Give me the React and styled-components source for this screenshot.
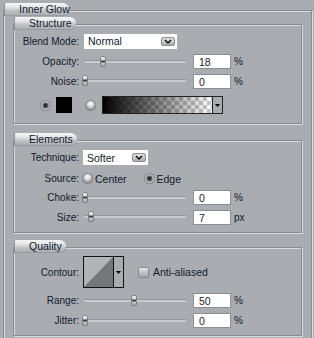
import React from 'react';
import styled, { createGlobalStyle } from 'styled-components';

const Global = createGlobalStyle`
  body {
    margin: 0;
    background: #a9acb0;
    font-family: "Liberation Sans", Arial, sans-serif;
    font-size: 10px;
    color: #111b2e;
    overflow: hidden;
  }
`;

const Panel = styled.div`
  padding: 10px 0 0 3px;
  width: 309px;
`;

// etched group box, like a classic fieldset
const Group = styled.section`
  display: flex;
  flex-direction: column;
  border: 1px solid #888b8f;
  box-shadow: inset 1px 1px 0 #d8dadc, 1px 1px 0 #d8dadc;
  margin: ${({ $mt }) => $mt || 0}px ${({ $mx }) => $mx || 0}px 0 ${({ $ml }) => $ml || 0}px;
  padding-bottom: ${({ $pb }) => $pb || 0}px;
`;

const Tab = styled.div`
  align-self: flex-start;
  height: 13px;
  line-height: 13px;
  margin-top: -8px;
  padding: 0 4px 0 15px;
  ${({ $w }) => $w && `width: ${$w}px; box-sizing: border-box;`}
  border-radius: 1px 6px 6px 1px;
  background: linear-gradient(to bottom, #f6f7f8 0%, #e4e6e8 30%, #bfc2c5 60%, #a6a9ac 100%);
  box-shadow: inset 1px 0 0 #8e9195, inset 0 -1px 0 #989b9f;
  font-size: 10.5px;
  white-space: nowrap;
`;

const Row = styled.div`
  display: flex;
  align-items: center;
  height: ${({ $h }) => $h}px;
`;

const Label = styled.span`
  width: 65px;
  flex-shrink: 0;
  text-align: right;
  white-space: nowrap;
`;

const Select = styled.div`
  display: flex;
  align-items: center;
  justify-content: space-between;
  box-sizing: border-box;
  width: ${({ $w }) => $w}px;
  height: 15px;
  margin-left: ${({ $ml }) => $ml}px;
  padding: 0 2px 0 4px;
  background: #fff;
  font-size: 10.5px;
`;

const DropButton = styled.span`
  display: flex;
  align-items: center;
  justify-content: center;
  width: 14px;
  height: 9px;
  border-radius: 3px;
  background: linear-gradient(to bottom, #eceef0, #a3a6aa);
  box-shadow: inset 0 0 0 1px #8a8d91;
`;

const Slider = styled.div`
  position: relative;
  width: 104px;
  height: 12px;
  margin-left: 3px;
  flex-shrink: 0;
  &::before {
    content: '';
    position: absolute;
    left: 2px;
    right: 0;
    top: 5px;
    height: 2px;
    border-radius: 1px;
    background: #c9cbce;
    box-shadow: 0 -1px 0 #929599;
  }
`;

const Thumb = styled.span`
  position: absolute;
  top: 0;
  width: 6px;
  height: 11px;
  border-radius: 2px;
  background: linear-gradient(to bottom, #f2f3f4 0%, #d2d4d6 40%, #3a3c40 42%, #3a3c40 58%, #c5c7ca 60%, #9fa2a5 100%);
  box-shadow: inset 0 0 0 1px #7d8084;
`;

const Field = styled.div`
  box-sizing: border-box;
  width: 38px;
  height: 15px;
  margin-left: 7px;
  padding-left: 5px;
  line-height: 14px;
  background: #fff;
  border: 1px solid #8c8f93;
  color: #1c2233;
  font-size: 10.5px;
`;

const Unit = styled.span`
  margin-left: 3px;
`;

const Radio = styled.span`
  flex-shrink: 0;
  width: 11px;
  height: 11px;
  border-radius: 50%;
  margin-left: ${({ $ml }) => $ml}px;
  background: ${({ $on }) => $on
    ? 'radial-gradient(circle at 50% 50%, #2e3034 0 1.5px, #6d7074 2.5px, #c9cbce 4px, #9a9da1 5.5px)'
    : 'radial-gradient(circle at 50% 35%, #ffffff 0, #e2e4e6 2px, #bbbec1 4px, #8f9296 5.5px)'};
  box-shadow: inset 0 0 0 1px #85888c;
`;

const RadioText = styled.span`
  margin-left: 2px;
  font-size: 10.5px;
`;

const Swatch = styled.span`
  width: 16px;
  height: 16px;
  margin-left: 5px;
  background: #000;
`;

const GradientPick = styled.div`
  display: flex;
  height: 16px;
  margin-left: 6px;
  border: 1px solid #222;
`;

const GradientBar = styled.span`
  width: 109px;
  background:
    linear-gradient(to right, #000 0%, rgba(0, 0, 0, 0) 100%),
    conic-gradient(#c8c8c8 25%, #ffffff 0 50%, #c8c8c8 0 75%, #ffffff 0) 0 0 / 8px 8px;
`;

const ArrowCell = styled.span`
  display: flex;
  align-items: center;
  justify-content: center;
  width: 9px;
  border-left: 1px solid #222;
  background: #a9acb0;
`;

const ContourPick = styled.div`
  display: flex;
  width: 41px;
  height: 32px;
  margin-left: 4px;
  box-sizing: border-box;
  border: 1px solid #111;
`;

const ContourPreview = styled.svg`
  display: block;
  width: 29px;
  height: 30px;
  border-right: 1px solid #111;
`;

const ContourArrow = styled.span`
  display: flex;
  align-items: center;
  justify-content: center;
  flex: 1;
`;

const Check = styled.span`
  width: 11px;
  height: 11px;
  margin-left: 14px;
  border-radius: 2px;
  background: linear-gradient(to bottom, #eeeff0, #c2c4c7 50%, #9a9da1);
  box-shadow: inset 0 0 0 1px #85888c;
`;

const CheckText = styled.span`
  margin-left: 4px;
  font-size: 10.5px;
`;

const Chevron = () => (
  <svg width="8" height="5" viewBox="0 0 8 5">
    <path d="M1 1 L4 4 L7 1" fill="none" stroke="#111" strokeWidth="1.5" />
  </svg>
);

const Tri = () => (
  <svg width="5" height="3" viewBox="0 0 5 3">
    <path d="M0 0 H5 L2.5 3 Z" fill="#000" />
  </svg>
);

const SliderRow = ({ h, label, thumb, value, unit }) => (
  <Row $h={h}>
    <Label>{label}</Label>
    <Slider>
      <Thumb style={{ left: thumb }} />
    </Slider>
    <Field>{value}</Field>
    <Unit>{unit}</Unit>
  </Row>
);

export default function App() {
  return (
    <Panel>
      <Global />
      <Group $pb={12}>
        <Tab $w={65}>Inner Glow</Tab>

        <Group $mt={8} $ml={9} $mx={9} $pb={4}>
          <Tab>Structure</Tab>
          <Row $h={22}>
            <Label>Blend Mode:</Label>
            <Select $w={93} $ml={5}>
              Normal
              <DropButton><Chevron /></DropButton>
            </Select>
          </Row>
          <SliderRow h={19} label="Opacity:" thumb={18} value="18" unit="%" />
          <SliderRow h={20} label="Noise:" thumb={0} value="0" unit="%" />
          <Row $h={28}>
            <Radio $ml={26} $on />
            <Swatch />
            <Radio $ml={13} />
            <GradientPick>
              <GradientBar />
              <ArrowCell><Tri /></ArrowCell>
            </GradientPick>
          </Row>
        </Group>

        <Group $mt={16} $ml={9} $mx={9} $pb={5}>
          <Tab>Elements</Tab>
          <Row $h={23}>
            <Label>Technique:</Label>
            <Select $w={65} $ml={4}>
              Softer
              <DropButton><Chevron /></DropButton>
            </Select>
          </Row>
          <Row $h={19}>
            <Label>Source:</Label>
            <Radio $ml={3} />
            <RadioText>Center</RadioText>
            <Radio $ml={17} $on />
            <RadioText>Edge</RadioText>
          </Row>
          <SliderRow h={19} label="Choke:" thumb={0} value="0" unit="%" />
          <SliderRow h={20} label="Size:" thumb={6} value="7" unit="px" />
        </Group>

        <Group $mt={14} $ml={9} $mx={9} $pb={4}>
          <Tab>Quality</Tab>
          <Row $h={38}>
            <Label>Contour:</Label>
            <ContourPick>
              <ContourPreview viewBox="0 0 29 30">
                <rect width="29" height="30" fill="#b1b3b6" />
                <path d="M0 30 L29 0 L29 30 Z" fill="#75777a" />
              </ContourPreview>
              <ContourArrow><Tri /></ContourArrow>
            </ContourPick>
            <Check />
            <CheckText>Anti-aliased</CheckText>
          </Row>
          <SliderRow h={19} label="Range:" thumb={49} value="50" unit="%" />
          <SliderRow h={21} label="Jitter:" thumb={0} value="0" unit="%" />
        </Group>
      </Group>
    </Panel>
  );
}
